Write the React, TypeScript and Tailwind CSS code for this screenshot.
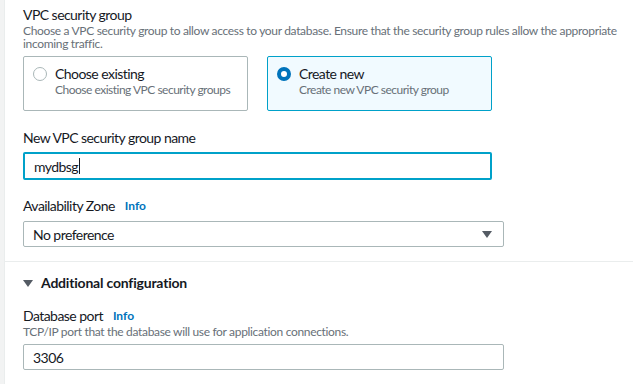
import React from "react";

const font = { fontFamily: "Lato, 'Liberation Sans', sans-serif" };

const Info = () => (
  <span className="ml-[10px] text-[12px] font-bold tracking-normal text-[#0073bb]">
    Info
  </span>
);

const Caret = ({ className }: { className: string }) => (
  <svg width="10" height="7" viewBox="0 0 10 7" className={className}>
    <path d="M0 0 L10 0 L5 7 Z" fill="currentColor" />
  </svg>
);

const RadioCard = ({
  title,
  desc,
  selected,
}: {
  title: string;
  desc: string;
  selected?: boolean;
}) => (
  <div
    className={
      selected
        ? "flex h-[55px] w-[225px] rounded-[2px] border border-[#00a1c9] bg-[#f1faff] pl-[9px] pt-[8px]"
        : "flex h-[55px] w-[225px] rounded-[2px] border border-[#aab7b8] bg-white pl-[9px] pt-[8px]"
    }
  >
    <div className="mt-[2px] mr-[8px]">
      {selected ? (
        <div className="h-[14px] w-[14px] rounded-full border-[4px] border-[#0073bb] bg-white" />
      ) : (
        <div className="h-[14px] w-[14px] rounded-full border-[1.5px] border-[#aab7b8] bg-white" />
      )}
    </div>
    <div>
      <div className="text-[14px] leading-[18px] tracking-[-0.55px] text-[#16191f]">
        {title}
      </div>
      <div className="text-[12px] leading-[14px] tracking-[-0.5px] text-[#687078]">
        {desc}
      </div>
    </div>
  </div>
);

export default function App() {
  return (
    <div className="flex h-[384px] w-[633px] bg-[#f2f3f3]" style={font}>
      <div className="w-[4px]" />
      <div className="flex-1 border-l border-[#eaeded] bg-white">
        <div className="pl-[18px] pt-[6px] pb-[14px]">
          <div className="text-[14px] leading-[18px] tracking-[-0.55px] text-[#16191f]">
            VPC security group
          </div>
          <div className="w-[600px] text-[12px] leading-[13px] tracking-[-0.33px] text-[#687078]">
            Choose a VPC security group to allow access to your database. Ensure
            that the security group rules allow the appropriate incoming traffic.
          </div>
          <div className="mt-[6px] flex gap-[19px]">
            <RadioCard
              title="Choose existing"
              desc="Choose existing VPC security groups"
            />
            <RadioCard
              title="Create new"
              desc="Create new VPC security group"
              selected
            />
          </div>
          <div className="mt-[17px] text-[14px] leading-[20px] tracking-[-0.55px] text-[#16191f]">
            New VPC security group name
          </div>
          <div className="mt-[4px] flex h-[28px] w-[469px] items-center rounded-[2px] border-2 border-[#00a1c9] pl-[9px] text-[14px] tracking-[-0.55px] text-[#16191f]">
            mydbsg
            <span className="ml-[1px] h-[16px] w-[1px] bg-[#16191f]" />
          </div>
          <div className="mt-[16px] flex items-center text-[14px] leading-[20px] tracking-[-0.55px] text-[#16191f]">
            Availability Zone
            <Info />
          </div>
          <div className="mt-[5px] flex h-[26px] w-[481px] items-center justify-between rounded-[2px] border border-[#aab7b8] pl-[9px] pr-[11px] text-[14px] tracking-[-0.55px] text-[#16191f]">
            No preference
            <Caret className="text-[#545b64]" />
          </div>
        </div>
        <div className="border-t border-[#eaeded] pl-[18px] pt-[11px]">
          <div className="flex items-center text-[14px] leading-[20px] font-bold tracking-[-0.2px] text-[#16191f]">
            <Caret className="mr-[8px] text-[#545b64]" />
            Additional configuration
          </div>
          <div className="mt-[14px] flex items-center text-[14px] leading-[18px] tracking-[-0.55px] text-[#16191f]">
            Database port
            <Info />
          </div>
          <div className="text-[12px] leading-[14px] tracking-[-0.33px] text-[#687078]">
            TCP/IP port that the database will use for application connections.
          </div>
          <div className="mt-[5px] flex h-[26px] w-[481px] items-center rounded-[2px] border border-[#aab7b8] pl-[9px] text-[14px] tracking-[-0.55px] text-[#16191f]">
            3306
          </div>
        </div>
      </div>
    </div>
  );
}
